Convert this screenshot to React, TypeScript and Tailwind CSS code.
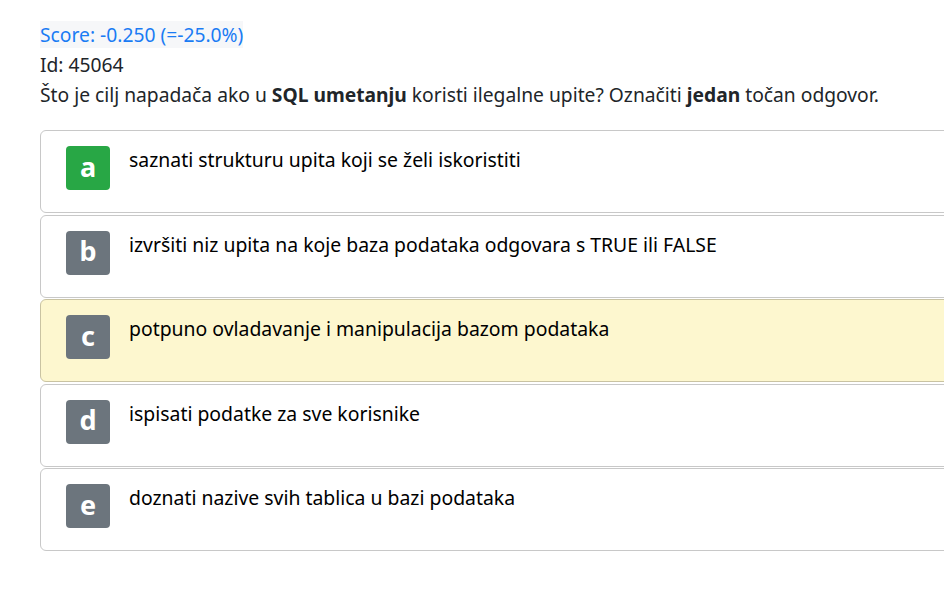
const OPTIONS = [
  { key: "a", text: "saznati strukturu upita koji se želi iskoristiti", correct: true },
  { key: "b", text: "izvršiti niz upita na koje baza podataka odgovara s TRUE ili FALSE" },
  { key: "c", text: "potpuno ovladavanje i manipulacija bazom podataka", selected: true },
  { key: "d", text: "ispisati podatke za sve korisnike" },
  { key: "e", text: "doznati nazive svih tablica u bazi podataka" },
];

export default function App() {
  return (
    <div className="h-[614px] w-[944px] overflow-hidden bg-white pl-10 pt-[20px] font-['Noto_Sans',sans-serif] text-[19.25px] text-[#212529]">
      <div className="leading-[30px]">
        <span className="bg-[#f6f7f9] text-[#1a7cf4]">Score: -0.250 (=-25.0%)</span>
      </div>
      <div className="leading-[30px]">Id: 45064</div>
      <div className="leading-[30px]">
        Što je cilj napadača ako u <b>SQL umetanju</b> koristi ilegalne upite? Označiti{" "}
        <b>jedan</b> točan odgovor.
      </div>

      <div className="mt-[20px] flex w-[960px] flex-col gap-[1.5px]">
        {OPTIONS.map((o) => (
          <div
            key={o.key}
            className={
              o.selected
                ? "flex h-[83px] items-start gap-[19px] rounded-[6px] border border-[#c9c3a2] bg-[#fdf7cf] pl-[25px] pt-[15px]"
                : "flex h-[83px] items-start gap-[19px] rounded-[6px] border border-[#c8c8c8] bg-white pl-[25px] pt-[15px]"
            }
          >
            <div
              className={
                o.correct
                  ? "flex h-[44px] w-[44px] shrink-0 items-center justify-center rounded-[4px] bg-[#28a745] pb-[2px] text-[27px] font-bold text-white"
                  : "flex h-[44px] w-[44px] shrink-0 items-center justify-center rounded-[4px] bg-[#6c757d] pb-[2px] text-[27px] font-bold text-white"
              }
            >
              {o.key}
            </div>
            <div className="text-[19.4px] leading-[28px] text-black">{o.text}</div>
          </div>
        ))}
      </div>
    </div>
  );
}
